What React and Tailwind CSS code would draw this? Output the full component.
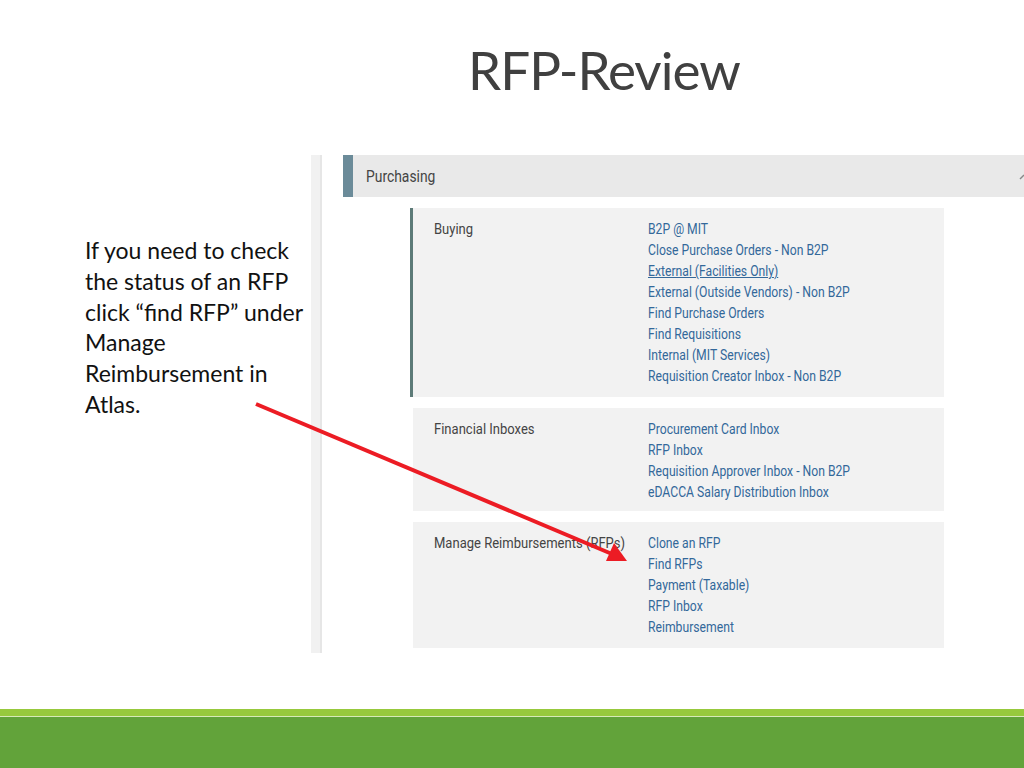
const sections = [
  {
    label: "Buying",
    accent: true,
    height: "h-[189px]",
    links: [
      "B2P @ MIT",
      "Close Purchase Orders - Non B2P",
      "External (Facilities Only)",
      "External (Outside Vendors) - Non B2P",
      "Find Purchase Orders",
      "Find Requisitions",
      "Internal (MIT Services)",
      "Requisition Creator Inbox - Non B2P",
    ],
  },
  {
    label: "Financial Inboxes",
    height: "h-[103px]",
    links: [
      "Procurement Card Inbox",
      "RFP Inbox",
      "Requisition Approver Inbox - Non B2P",
      "eDACCA Salary Distribution Inbox",
    ],
  },
  {
    label: "Manage Reimbursements (RFPs)",
    height: "h-[126px]",
    links: ["Clone an RFP", "Find RFPs", "Payment (Taxable)", "RFP Inbox", "Reimbursement"],
  },
];

const intro = [
  "If you need to check",
  "the status of an RFP",
  "click “find RFP” under",
  "Manage",
  "Reimbursement in",
  "Atlas.",
];

// the screenshot uses a condensed face; squeeze Roboto to match
const squeeze = "inline-block origin-left scale-x-[0.84] whitespace-nowrap";

const MenuBox = ({ section }) => (
  <div
    className={`${section.height} shrink-0 flex bg-[#f2f2f2] pt-[11px] ${
      section.accent ? "ml-[67px] w-[534px] border-l-[3px] border-[#5d7b78]" : "ml-[70px] w-[531px]"
    }`}
  >
    <div className="w-[214px] pl-[21px] box-content text-[15.5px] leading-[21px] text-[#444]">
      <span className={squeeze}>{section.label}</span>
    </div>
    <div className="flex flex-col text-[14.5px] leading-[21px] text-[#33689a]">
      {section.links.map((l) => (
        <span key={l} className={squeeze}>
          <span className={l === "External (Facilities Only)" ? "underline" : ""}>{l}</span>
        </span>
      ))}
    </div>
  </div>
);

export default function App() {
  return (
    <div className="relative w-[1024px] h-[768px] bg-white flex flex-col overflow-hidden">
      {/* title */}
      <div className="h-[155px] shrink-0 pl-[468px] pt-[38px]">
        <h1 className="font-['Lato','Open_Sans',sans-serif] text-[53px] leading-[64px] text-[#404040] tracking-[-1px]">
          RFP-Review
        </h1>
      </div>

      <div className="flex pl-[85px]">
        <div className="w-[226px] pt-[80px] font-['Lato','Open_Sans',sans-serif] text-[23px] leading-[30.8px] text-[#111]">
          {intro.map((line) => (
            <div key={line} className="whitespace-nowrap">
              {line}
            </div>
          ))}
        </div>

        {/* screenshot */}
        <div className="flex h-[498px] w-[713px] font-['Roboto',sans-serif]">
          <div className="w-[11px] bg-[#f1f1f1] border-r-[2px] border-[#e6e6e6]" />
          <div className="flex-1 ml-[21px] flex flex-col">
            <div className="h-[42px] shrink-0 flex items-center justify-between bg-[#e9e9e9] border-l-[10px] border-[#6b8b99] pl-[13px] pt-[2px]">
              <span className="text-[16.5px] text-[#444]">
                <span className={squeeze}>Purchasing</span>
              </span>
              <svg width="10" height="10" viewBox="0 0 10 10" className="mr-[-4px]">
                <path d="M2 7 L6 3" stroke="#888" strokeWidth="1.5" fill="none" />
              </svg>
            </div>
            <div className="flex flex-col gap-[11px] mt-[11px]">
              {sections.map((s) => (
                <MenuBox key={s.label} section={s} />
              ))}
            </div>
          </div>
        </div>
      </div>

      {/* footer */}
      <div className="mt-auto">
        <div className="h-[7px] bg-[#97c93d]" />
        <div className="h-[1px] bg-[#d8eab8]" />
        <div className="h-[51px] bg-[#62a33a]" />
      </div>

      {/* red arrow */}
      <svg className="absolute inset-0 pointer-events-none" width="1024" height="768">
        <line x1="256" y1="404" x2="612" y2="554" stroke="#ec1c24" strokeWidth="4" />
        <polygon points="627,561 606,561 614,543" fill="#ec1c24" />
      </svg>
    </div>
  );
}
